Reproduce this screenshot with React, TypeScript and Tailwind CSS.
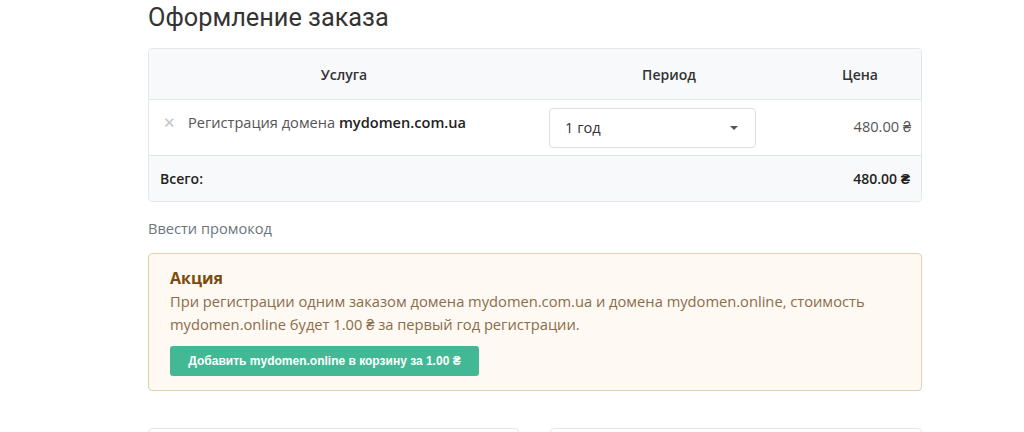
export default function App() {
  return (
    <div className="min-h-screen bg-white font-['Open_Sans',sans-serif] text-[14px] text-[#333]">
      <div className="ml-[148px] w-[774px] pt-[3px]">
        <h1 className="font-['Roboto',sans-serif] text-[25.3px] leading-[30px] font-normal text-[#333]">
          Оформление заказа
        </h1>

        <div className="mt-[15px] overflow-hidden rounded-[4px] border border-[#e3e6ea]">
          <div className="grid grid-cols-[390px_260px_1fr] bg-[#f8f9fa] border-b border-[#e3e6ea] h-[51px] items-center font-semibold">
            <div className="text-center">Услуга</div>
            <div className="text-center">Период</div>
            <div className="text-center">Цена</div>
          </div>
          <div className="grid grid-cols-[390px_260px_1fr] bg-white border-b border-[#e3e6ea] h-[56px]">
            <div className="flex items-start gap-[12px] pl-[14px] pt-[12px]">
              <span className="text-[#c4c4c4] text-[15px] leading-[20px]">✕</span>
              <span className="text-[14.6px] leading-[20px] text-[#555]">
                Регистрация домена <span className="font-semibold text-[#222]">mydomen.com.ua</span>
              </span>
            </div>
            <div className="pl-[10px] pt-[8px]">
              <div className="flex h-[40px] w-[207px] items-center justify-between rounded-[4px] border border-[#dcdfe3] bg-white pl-[15px] pr-[17px] text-[14.6px] text-[#333]">
                <span>1 год</span>
                <svg width="8" height="4" viewBox="0 0 8 4">
                  <path d="M0 0h8L4 4z" fill="#555" />
                </svg>
              </div>
            </div>
            <div className="pr-[10px] pt-[16px] text-right text-[14.6px] leading-[20px] text-[#555]">480.00 ₴</div>
          </div>
          <div className="flex h-[45px] items-center justify-between bg-[#f8f9fa] px-[11px] font-semibold text-[#222]">
            <span>Всего:</span>
            <span>480.00 ₴</span>
          </div>
        </div>

        <div className="mt-[16px] text-[14.6px] leading-[20px] text-[#6c757d]">Ввести промокод</div>

        <div className="mt-[15px] rounded-[4px] border border-[#e2cfae] bg-[#fef9f2] px-[21px] pt-[12px] pb-[14px]">
          <div className="text-[16px] leading-[24px] font-bold text-[#7a4b0c]">Акция</div>
          <p className="text-[14.7px] leading-[23px] text-[#8a6d4b]">
            При регистрации одним заказом домена mydomen.com.ua и домена mydomen.online, стоимость mydomen.online
            будет 1.00 ₴ за первый год регистрации.
          </p>
          <button className="mt-[10px] h-[30px] w-[309px] rounded-[3px] bg-[#42b894] font-['Liberation_Sans',sans-serif] text-[12px] font-bold text-white">
            Добавить mydomen.online в корзину за 1.00 ₴
          </button>
        </div>

        <div className="mt-[37px] grid grid-cols-[371px_372px] justify-between">
          <div className="h-[40px] rounded-[4px] border border-[#e3e6ea]" />
          <div className="h-[40px] rounded-[4px] border border-[#e3e6ea]" />
        </div>
      </div>
    </div>
  )
}
